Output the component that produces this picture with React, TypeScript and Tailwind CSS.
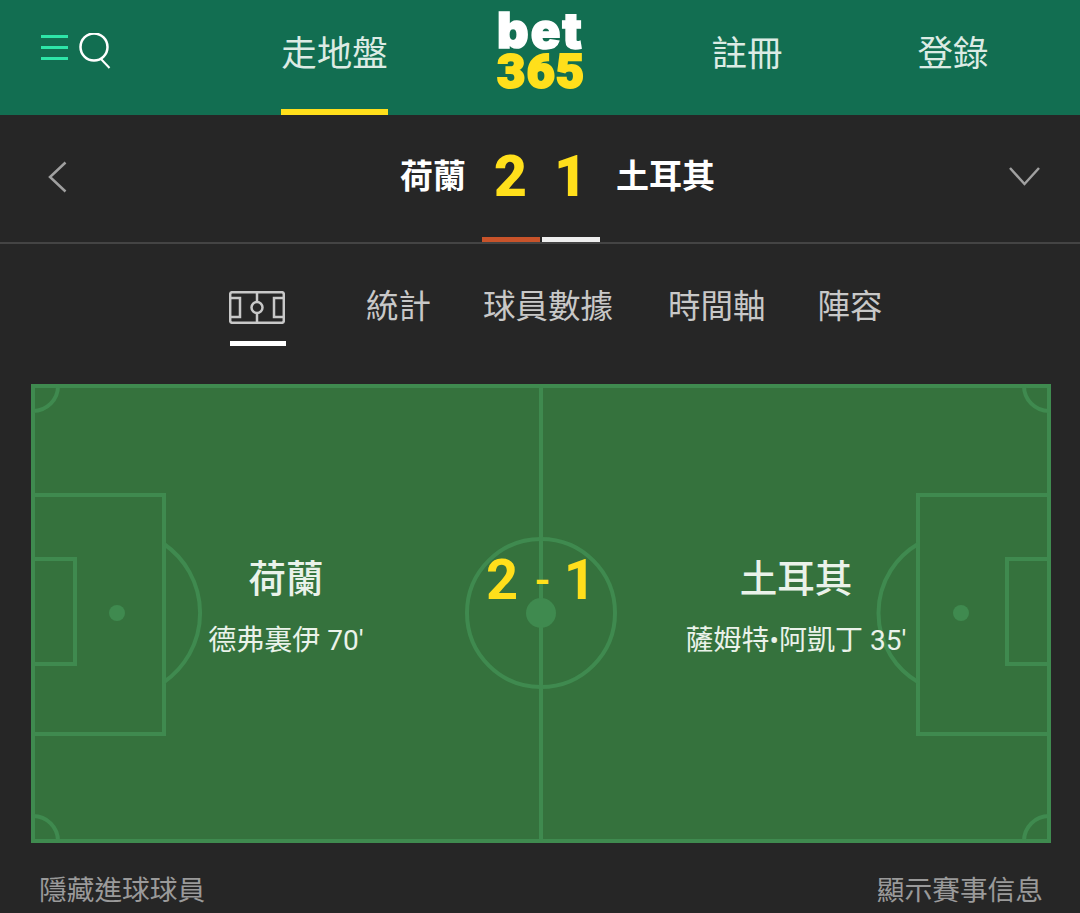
import React from "react";

const FONT = "font-['Roboto','Noto_Sans_CJK_TC',sans-serif]";

// one half of the pitch, the right half is mirrored and has a slightly different arc
function HalfPitch({ spotX, arcRadius }: { spotX: number; arcRadius: number }) {
  return (
    <>
      <rect x="2" y="111" width="131" height="239" />
      <rect x="2" y="175" width="42" height="105" />
      <path d={`M133 160 A ${arcRadius} ${arcRadius} 0 0 1 133 298`} />
      <circle cx={spotX} cy="229" r="8" fill="#3f8a4f" stroke="none" />
      <path d="M27 2 A 25 25 0 0 1 2 27" />
      <path d="M2 432 A 25 25 0 0 1 27 457" />
    </>
  );
}

function PitchLines() {
  return (
    <svg viewBox="0 0 1020 459" className="absolute inset-0 h-full w-full" fill="none" stroke="#3f8a4f" strokeWidth="4">
      <rect x="2" y="2" width="1016" height="455" />
      <line x1="510" y1="2" x2="510" y2="457" />
      <circle cx="510" cy="229" r="74" />
      <circle cx="510" cy="229" r="15" fill="#3f8a4f" stroke="none" />
      <HalfPitch spotX={86} arcRadius={84} />
      <g transform="translate(1020 0) scale(-1 1)">
        <HalfPitch spotX={90} arcRadius={80} />
      </g>
    </svg>
  );
}

function PitchIcon() {
  return (
    <svg viewBox="0 0 56 33" className="h-[33px] w-[56px]" fill="none" stroke="#c8c8c8" strokeWidth="2.5">
      <rect x="1.2" y="1.2" width="53.6" height="30.6" rx="2" />
      <line x1="28" y1="1" x2="28" y2="11" />
      <line x1="28" y1="22" x2="28" y2="32" />
      <circle cx="28" cy="16.5" r="5.5" />
      <path d="M1 7 H11 V26 H1" />
      <path d="M55 7 H45 V26 H55" />
    </svg>
  );
}

export default function App() {
  return (
    <div className={`flex h-[913px] flex-col overflow-hidden bg-[#262626] ${FONT}`}>
      {/* --- HEADER --- */}
      <header className="flex h-[115px] bg-[#126e51]">
        <div className="w-[281px] pl-[41px] pt-[33px]">
          <svg width="70" height="36" viewBox="0 0 70 36" fill="none">
            <path d="M0 3.5H27M0 14.5H27M0 25.5H27" stroke="#2ee5a8" strokeWidth="3" />
            <circle cx="53" cy="14" r="13.5" stroke="#fff" strokeWidth="2.5" />
            <path d="M60 26L68.5 35" stroke="#fff" strokeWidth="2" />
          </svg>
        </div>
        <div className="flex w-[107px] items-start justify-center whitespace-nowrap border-b-[6px] border-[#ffdf1b] pt-[32px] text-[35.5px] leading-[44px] text-[#dcebe4]">
          走地盤
        </div>
        <div className="ml-[109px] w-[88px] whitespace-nowrap font-black">
          <div className="mt-[10px] h-[42px] font-['Inter',sans-serif] text-[49px] leading-[42px] tracking-[2px] text-white [-webkit-text-stroke:1.5px_white]">bet</div>
          <div className="h-[40px] font-['Roboto',sans-serif] text-[49px] leading-[40px] tracking-[1px] text-[#ffdf1b] [-webkit-text-stroke:2px_#ffdf1b]">365</div>
        </div>
        <div className="ml-[126px] w-[72px] whitespace-nowrap pt-[32px] text-center text-[35.5px] leading-[44px] text-[#dcebe4]">註冊</div>
        <div className="ml-[134px] w-[72px] whitespace-nowrap pt-[32px] text-center text-[35.5px] leading-[44px] text-[#dcebe4]">登錄</div>
      </header>

      {/* --- MATCH BAR --- */}
      <div className="relative flex h-[129px] flex-col border-b-2 border-[#444444]">
        <div className="flex h-[122px] items-center pl-[48px] pr-[40px]">
          <svg className="mt-[2px]" width="19" height="32" viewBox="0 0 19 32" fill="none" stroke="#a0a0a0" strokeWidth="2.5">
            <path d="M17.5 1.5L2 16L17.5 30.5" />
          </svg>
          <div className="ml-[333px] flex items-center font-bold text-white">
            <span className="text-[33px] leading-none">荷蘭</span>
            <span className="ml-[28px] w-[32px] text-center text-[57px] leading-none font-black text-[#ffdf1b]">2</span>
            <span className="ml-[28px] w-[30px] text-center text-[57px] leading-none font-black text-[#ffdf1b]">1</span>
            <span className="ml-[32px] text-[33px] leading-none">土耳其</span>
          </div>
          <svg className="ml-auto" width="31" height="20" viewBox="0 0 31 20" fill="none" stroke="#a0a0a0" strokeWidth="2.5">
            <path d="M1 2L15.5 18L30 2" />
          </svg>
        </div>
        <div className="flex h-[5px] justify-center gap-[2px] pl-[2px]">
          <div className="w-[58px] bg-[#c8532a]" />
          <div className="w-[58px] bg-[#eeeeee]" />
        </div>
      </div>

      {/* --- TABS --- */}
      <nav className="flex h-[140px] items-start whitespace-nowrap pl-[229px] pt-[47px] text-[32.5px] leading-[33px] text-[#c8c8c8]">
        <div className="flex w-[57px] flex-col items-start gap-[17px]">
          <PitchIcon />
          <div className="ml-px h-[5px] w-[56px] bg-white" />
        </div>
        <span className="ml-[80px]">統計</span>
        <span className="ml-[52px]">球員數據</span>
        <span className="ml-[55px]">時間軸</span>
        <span className="ml-[52px]">陣容</span>
      </nav>

      {/* --- PITCH --- */}
      <div className="relative mx-[31px] h-[459px] w-[1020px] shrink-0 bg-[#35723d]">
        <PitchLines />
        <div className="relative grid grid-cols-2 pt-[171px] text-center text-[#eaf2ea]">
          <div>
            <div className="text-[37.5px] leading-[48px] font-medium">荷蘭</div>
            <div className="mt-[20px] text-[28px] leading-[36px]">德弗裏伊 70'</div>
          </div>
          <div>
            <div className="text-[37.5px] leading-[48px] font-medium">土耳其</div>
            <div className="mt-[20px] text-[28px] leading-[36px]">薩姆特•阿凱丁 35'</div>
          </div>
        </div>
        <div className="absolute left-[455px] top-[163px] flex w-[108px] items-center justify-between text-[56px] leading-[66px] font-bold text-[#ffdf1b]">
          <span>2</span>
          <span className="ml-[3px] text-[44px] font-medium">-</span>
          <span className="-mr-[2px]">1</span>
        </div>
      </div>

      {/* --- FOOTER LINKS --- */}
      <div className="flex justify-between pl-[39px] pr-[37px] pt-[30px] text-[27.7px] leading-[36px] text-[#9a9a9a]">
        <span>隱藏進球球員</span>
        <span>顯示賽事信息</span>
      </div>
    </div>
  );
}
